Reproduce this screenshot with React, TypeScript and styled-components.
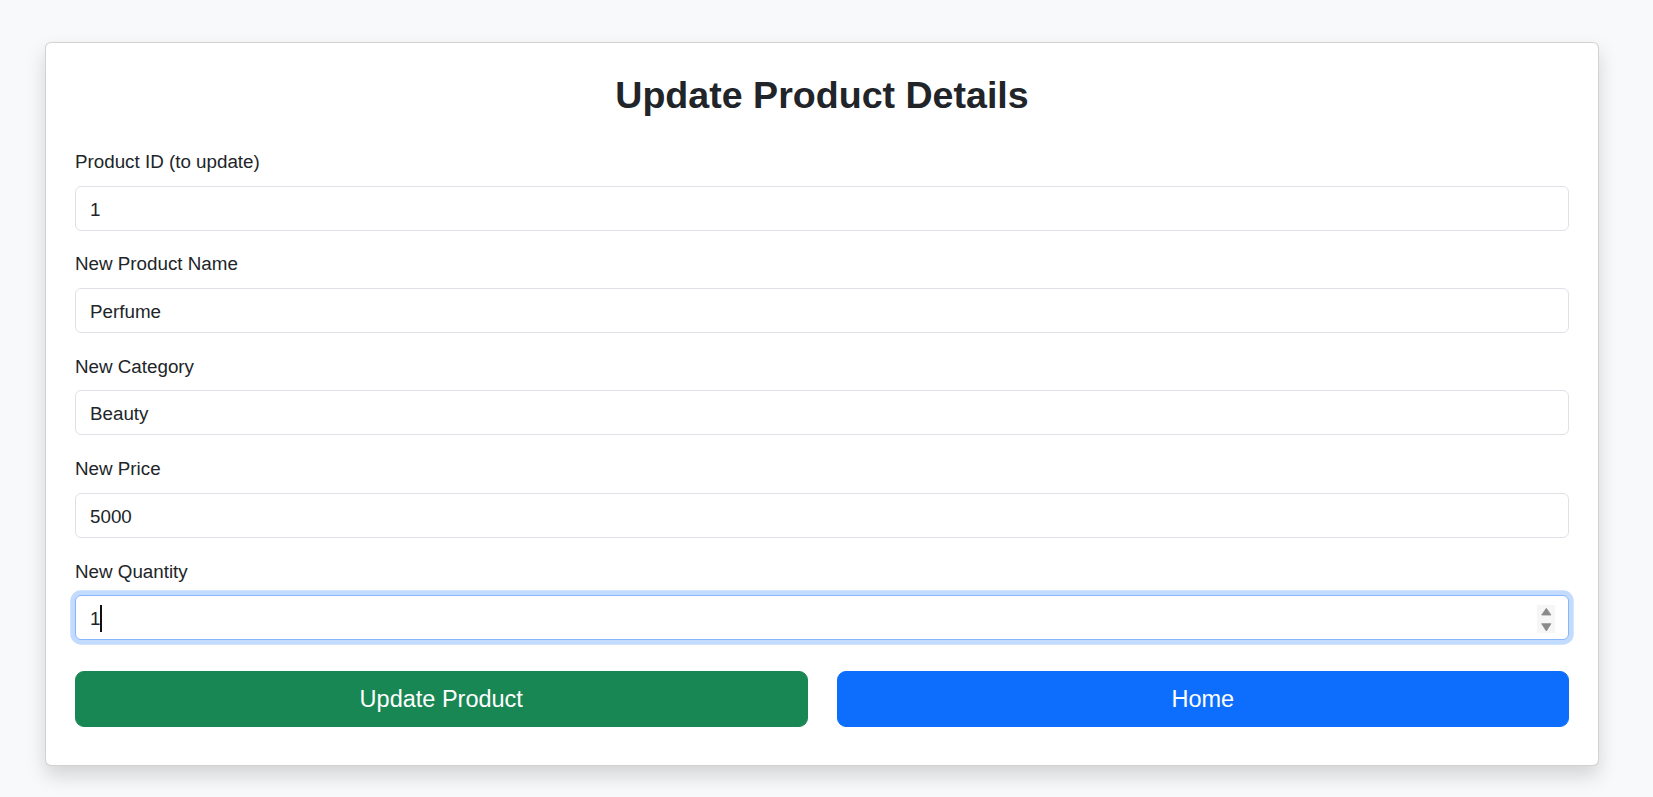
import React from "react";
import styled, { createGlobalStyle, css } from "styled-components";

const GlobalStyle = createGlobalStyle`
  html, body {
    margin: 0;
    padding: 0;
    background: #f8f9fa;
  }
  body {
    font-family: "Liberation Sans", Arial, sans-serif;
    color: #212529;
  }
  * { box-sizing: border-box; }
`;

const Page = styled.main`
  padding: 42px 54px 31px 45px;
`;

const Card = styled.section`
  background: #ffffff;
  border: 1px solid rgba(0, 0, 0, 0.175);
  border-radius: 6px;
  box-shadow: 0 9.4px 18.8px rgba(0, 0, 0, 0.15);
  padding: 30px 29px 38.5px;
`;

const Title = styled.h2`
  margin: 0 0 30px;
  text-align: center;
  font-size: 37.6px;
  line-height: 45px;
  font-weight: 700;
  color: #212529;
`;

const Form = styled.form`
  display: flex;
  flex-direction: column;
  gap: 19.8px;
`;

const Group = styled.div`
  display: flex;
  flex-direction: column;
`;

const Label = styled.label`
  display: block;
  font-size: 18.8px;
  line-height: 28.2px;
  margin-bottom: 9.4px;
  color: #212529;
`;

const FieldWrap = styled.div`
  position: relative;
`;

const Input = styled.input<{ $focused?: boolean }>`
  display: block;
  width: 100%;
  height: 45px;
  padding: 9px 14px 6px;
  font-family: inherit;
  font-size: 18.8px;
  line-height: 28px;
  color: #212529;
  background: #ffffff;
  border: 1px solid #dee2e6;
  border-radius: 6px;
  outline: none;
  ${(p) =>
    p.$focused &&
    css`
      border-color: #86b7fe;
      box-shadow: 0 0 0 4.7px rgba(13, 110, 253, 0.25);
    `}
`;

const Caret = styled.span`
  position: absolute;
  left: 25px;
  top: 10px;
  width: 2px;
  height: 27px;
  background: #111;
`;

const Spinner = styled.svg`
  position: absolute;
  right: 14px;
  top: 9.5px;
  width: 18px;
  height: 28px;
`;

const ButtonRow = styled.div`
  display: grid;
  grid-template-columns: 1fr 1fr;
  gap: 29px;
  margin-top: 30.5px;
`;

const Button = styled.button<{ $variant: "success" | "primary" }>`
  font-family: inherit;
  font-size: 23.5px;
  line-height: 35.25px;
  padding: 10.4px 18.8px 8.4px;
  border: 1px solid transparent;
  border-radius: 9px;
  color: #ffffff;
  cursor: pointer;
  background: ${(p) => (p.$variant === "success" ? "#198754" : "#0d6efd")};
  border-color: ${(p) => (p.$variant === "success" ? "#198754" : "#0d6efd")};
`;

const fields = [
  { id: "pid", label: "Product ID (to update)", value: "1" },
  { id: "pname", label: "New Product Name", value: "Perfume" },
  { id: "pcat", label: "New Category", value: "Beauty" },
  { id: "pprice", label: "New Price", value: "5000" },
];

export default function App() {
  return (
    <>
      <GlobalStyle />
      <Page>
        <Card>
          <Title>Update Product Details</Title>
          <Form onSubmit={(e) => e.preventDefault()}>
            {fields.map((f) => (
              <Group key={f.id}>
                <Label htmlFor={f.id}>{f.label}</Label>
                <Input id={f.id} value={f.value} readOnly />
              </Group>
            ))}
            <Group>
              <Label htmlFor="pqty">New Quantity</Label>
              <FieldWrap>
                <Input id="pqty" value="1" readOnly $focused />
                <Caret />
                <Spinner viewBox="0 0 18 28">
                  <rect x="0" y="0" width="18" height="28" fill="#f6f6f6" />
                  <path d="M4.7 10 L9.35 3.3 L14 10 Z" fill="#8a8a8a" stroke="#8a8a8a" strokeWidth="0.8" strokeLinejoin="round" />
                  <path d="M4.7 18.7 L14 18.7 L9.35 26 Z" fill="#8a8a8a" stroke="#8a8a8a" strokeWidth="0.8" strokeLinejoin="round" />
                </Spinner>
              </FieldWrap>
            </Group>
          </Form>
          <ButtonRow>
            <Button type="button" $variant="success">Update Product</Button>
            <Button type="button" $variant="primary">Home</Button>
          </ButtonRow>
        </Card>
      </Page>
    </>
  );
}
